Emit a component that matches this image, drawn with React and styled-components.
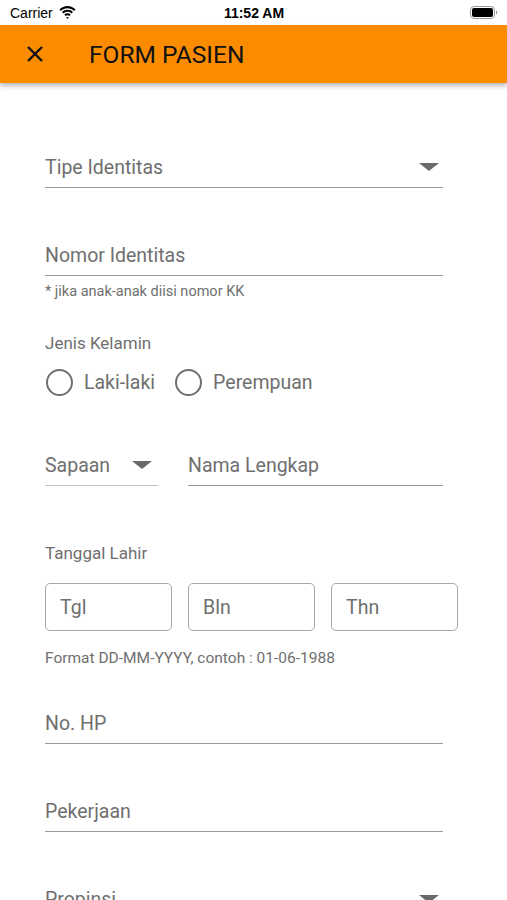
import React from "react";
import styled, { createGlobalStyle } from "styled-components";

const GlobalStyle = createGlobalStyle`
  body {
    margin: 0;
    background: #fff;
    font-family: Roboto, "Noto Sans", sans-serif;
  }
`;

const Screen = styled.div`
  width: 507px;
  height: 900px;
  overflow: hidden;
  background: #fff;
`;

const StatusBar = styled.div`
  height: 25px;
  display: grid;
  grid-template-columns: 1fr auto 1fr;
  align-items: center;
  padding: 0 9px 0 10px;
  font-family: "Liberation Sans", Arial, sans-serif;
  font-size: 14px;
  color: #000;
`;

const Left = styled.div`
  display: flex;
  align-items: center;
  gap: 6px;
`;

const Time = styled.div`
  font-weight: 700;
`;

const Right = styled.div`
  display: flex;
  justify-content: flex-end;
`;

const Header = styled.header`
  height: 58px;
  background: #fb8c00;
  display: flex;
  align-items: center;
  padding-left: 25px;
  box-shadow: 0 3px 5px rgba(0, 0, 0, 0.28);
  position: relative;
`;

const Title = styled.h1`
  margin: 0 0 0 44px;
  font-size: 24.5px;
  font-weight: 400;
  color: #111;
`;

const Form = styled.div`
  padding: 0 49px 0 45px;
  display: flex;
  flex-direction: column;
`;

const Field = styled.div`
  width: ${(p) => p.$width || "398px"};
  margin-top: ${(p) => p.$top}px;
  height: 24px;
  padding-bottom: 8px;
  border-bottom: 1.5px solid ${(p) => (p.$light ? "#c2c2c2" : "#9a9a9a")};
  display: flex;
  align-items: center;
  justify-content: space-between;
  font-size: 19.5px;
  color: #6f6f6f;
  box-sizing: content-box;
  white-space: nowrap;
`;

const Caret = styled.span`
  width: 0;
  height: 0;
  border-left: 10px solid transparent;
  border-right: 10px solid transparent;
  border-top: 8px solid #6a6a6a;
  margin-right: ${(p) => p.$right || 4}px;
`;

const Hint = styled.div`
  margin-top: ${(p) => p.$top}px;
  font-size: ${(p) => p.$size || 14.5}px;
  line-height: 16px;
  color: #6f6f6f;
`;

const Label = styled.div`
  margin-top: ${(p) => p.$top}px;
  font-size: 17px;
  line-height: 20px;
  color: #6f6f6f;
`;

const RadioRow = styled.div`
  margin-top: 15px;
  display: flex;
  align-items: center;
  height: 28px;
  font-size: 19.5px;
  color: #6f6f6f;
`;

const Radio = styled.span`
  width: 23px;
  height: 23px;
  border: 2.5px solid #6f6f6f;
  border-radius: 50%;
  margin-right: 11px;
  margin-left: ${(p) => p.$gap || 1}px;
`;

const Row = styled.div`
  display: flex;
  gap: 30px;
  margin-top: ${(p) => p.$top}px;
`;

const DateRow = styled.div`
  margin-top: 20px;
  display: grid;
  grid-template-columns: repeat(3, 127px);
  gap: 16px;
`;

const DateBox = styled.div`
  height: 46px;
  border: 1.5px solid #a8a8a8;
  border-radius: 5px;
  display: flex;
  align-items: center;
  padding-left: 14px;
  font-size: 19.5px;
  color: #6f6f6f;
`;

const Wifi = () => (
  <svg width="17" height="13" viewBox="0 0 17 13">
    <path d="M8.5 2.2c2.6 0 4.9 1 6.6 2.7l1.4-1.5C14.4 1.3 11.6 0 8.5 0S2.6 1.3.5 3.4l1.4 1.5C3.6 3.2 5.9 2.2 8.5 2.2z" fill="#000" />
    <path d="M8.5 5.8c1.6 0 3 .6 4.1 1.6l1.4-1.5C12.6 4.6 10.6 3.7 8.5 3.7S4.4 4.6 3 5.9l1.4 1.5c1.1-1 2.5-1.6 4.1-1.6z" fill="#000" />
    <path d="M8.5 9.3c.7 0 1.3.2 1.8.6l1.4-1.5c-.9-.7-2-1.2-3.2-1.2s-2.3.5-3.2 1.2l1.4 1.5c.5-.4 1.1-.6 1.8-.6z" fill="#000" />
    <path d="M8.5 13l1.4-1.6c-.4-.3-.9-.5-1.4-.5s-1 .2-1.4.5z" fill="#000" />
  </svg>
);

const Battery = () => (
  <svg width="28" height="13" viewBox="0 0 28 13">
    <rect x="0.5" y="0.5" width="24" height="12" rx="3.5" fill="none" stroke="#999" />
    <rect x="2" y="2" width="21" height="9" rx="2" fill="#000" />
    <path d="M26 4.5v4c.8-.3 1.3-1.1 1.3-2s-.5-1.7-1.3-2z" fill="#999" />
  </svg>
);

const Close = () => (
  <svg width="20" height="20" viewBox="0 0 20 20">
    <path d="M3 3l14 14M17 3L3 17" stroke="#111" strokeWidth="2.4" />
  </svg>
);

export default function App() {
  return (
    <Screen>
      <GlobalStyle />
      <StatusBar>
        <Left>
          Carrier <Wifi />
        </Left>
        <Time>11:52 AM</Time>
        <Right>
          <Battery />
        </Right>
      </StatusBar>
      <Header>
        <Close />
        <Title>FORM PASIEN</Title>
      </Header>
      <Form>
        <Field $top={72}>
          Tipe Identitas
          <Caret />
        </Field>
        <Field $top={55}>Nomor Identitas</Field>
        <Hint $top={8}>* jika anak-anak diisi nomor KK</Hint>
        <Label $top={33}>Jenis Kelamin</Label>
        <RadioRow>
          <Radio />
          Laki-laki
          <Radio $gap={20} />
          Perempuan
        </RadioRow>
        <Row $top={57}>
          <Field $width="113px" $light>
            Sapaan
            <Caret $right={6} />
          </Field>
          <Field $width="255px">Nama Lengkap</Field>
        </Row>
        <Label $top={57}>Tanggal Lahir</Label>
        <DateRow>
          <DateBox>Tgl</DateBox>
          <DateBox>Bln</DateBox>
          <DateBox>Thn</DateBox>
        </DateRow>
        <Hint $top={19} $size={15.5}>
          Format DD-MM-YYYY, contoh : 01-06-1988
        </Hint>
        <Field $top={45}>No. HP</Field>
        <Field $top={55}>Pekerjaan</Field>
        <Field $top={55}>
          Propinsi
          <Caret />
        </Field>
      </Form>
    </Screen>
  );
}
